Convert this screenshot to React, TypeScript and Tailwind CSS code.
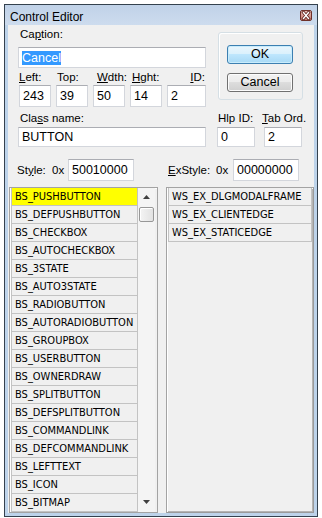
import React from "react";

const LEFT = [
  "BS_PUSHBUTTON",
  "BS_DEFPUSHBUTTON",
  "BS_CHECKBOX",
  "BS_AUTOCHECKBOX",
  "BS_3STATE",
  "BS_AUTO3STATE",
  "BS_RADIOBUTTON",
  "BS_AUTORADIOBUTTON",
  "BS_GROUPBOX",
  "BS_USERBUTTON",
  "BS_OWNERDRAW",
  "BS_SPLITBUTTON",
  "BS_DEFSPLITBUTTON",
  "BS_COMMANDLINK",
  "BS_DEFCOMMANDLINK",
  "BS_LEFTTEXT",
  "BS_ICON",
  "BS_BITMAP",
];

const RIGHT = ["WS_EX_DLGMODALFRAME", "WS_EX_CLIENTEDGE", "WS_EX_STATICEDGE"];

function Field({ className = "", children }: { className?: string; children?: React.ReactNode }) {
  return (
    <div
      className={`bg-white border border-[#d3d6dc] border-t-[#abadb3] flex items-center pl-[3px] text-[12.5px] leading-none text-black ${className}`}
    >
      {children}
    </div>
  );
}

function U({ children }: { children: React.ReactNode }) {
  return <span className="underline underline-offset-[1px]">{children}</span>;
}

function Row({ text, hi }: { text: string; hi?: boolean }) {
  return (
    <div
      className={`h-[18px] shrink-0 border-x border-b border-[#c3c3c3] pl-[3px] flex items-center text-[11px] leading-none text-black whitespace-nowrap font-['DejaVu_Sans_Condensed','DejaVu_Sans',sans-serif] [font-stretch:condensed] ${
        hi ? "bg-[#ffff00]" : "bg-[#f0f0f0]"
      }`}
    >
      {text}
    </div>
  );
}

export default function App() {
  return (
    <div className="w-[322px] h-[518px] bg-white overflow-hidden font-['Liberation_Sans',Arial,sans-serif] text-black">
      <div className="ml-[4px] mt-[4px] w-[314px] h-[513px] border border-[#34414e] bg-[#bdd3ea] flex flex-col">
        {/* Title bar */}
        <div className="h-[20px] shrink-0 flex items-start justify-between pl-[5px] pr-[5px] bg-[linear-gradient(to_bottom,#c0d2e8,#cddcee)]">
          <span className="mt-[5px] text-[12px] leading-[14px]">Control Editor</span>
          <div className="mt-[5px] w-[12px] h-[11px] rounded-[2px] border border-[#6e3029] bg-[linear-gradient(to_bottom,#e7bab3,#c77a70)] flex items-center justify-center">
            <svg width="10" height="9" viewBox="0 0 10 9">
              <path d="M2.5 1.5 L7.5 7.5 M7.5 1.5 L2.5 7.5" stroke="#5a1f19" strokeWidth="3" strokeLinecap="square" />
              <path d="M2.5 1.5 L7.5 7.5 M7.5 1.5 L2.5 7.5" stroke="#ffffff" strokeWidth="1.4" strokeLinecap="square" />
            </svg>
          </div>
        </div>

        {/* Frame + client */}
        <div className="px-[3px] pb-[3px]">
          <div className="w-[306px] h-[488px] bg-[#f0f0f0] flex flex-col">
            {/* Section 1 */}
            <div className="flex h-[82px] shrink-0">
              <div className="ml-[10px] w-[188px] flex flex-col">
                <div className="mt-[2px] h-[14px] leading-[14px] pl-[2px] text-[11.5px]">
                  Ca<U>p</U>tion:
                </div>
                <Field className="mt-[6px] h-[21px] w-[188px]">
                  <span className="bg-[#3399ff] text-white leading-[14px]">Cancel</span>
                </Field>
                <div className="mt-[2px] h-[14px] ml-[1px] flex gap-[5px] text-[11.5px] leading-[14px]">
                  <div className="w-[32px]">
                    <U>L</U>eft:
                  </div>
                  <div className="w-[32px] pl-[1px]">Top:</div>
                  <div className="w-[32px] pl-[4px]">
                    <U>W</U>dth:
                  </div>
                  <div className="w-[32px] pl-[2px]">
                    <U>H</U>ght:
                  </div>
                  <div className="w-[39px] text-right pr-[1px]">
                    <U>I</U>D:
                  </div>
                </div>
                <div className="mt-[1px] ml-[1px] flex gap-[5px]">
                  <Field className="w-[32px] h-[22px]">243</Field>
                  <Field className="w-[32px] h-[22px]">39</Field>
                  <Field className="w-[32px] h-[22px]">50</Field>
                  <Field className="w-[32px] h-[22px]">14</Field>
                  <Field className="w-[39px] h-[22px]">2</Field>
                </div>
              </div>
              <div className="ml-[12px] mt-[7px] w-[85px] h-[68px] rounded-[3px] border border-[#d5dfe5] shadow-[inset_1px_1px_0_#ffffff] flex flex-col pl-[8px] pt-[12px] gap-[9px]">
                <div className="w-[66px] h-[19px] rounded-[3px] border border-[#3c7fb1] bg-[linear-gradient(to_bottom,#eaf6fd_0%,#d9f0fc_50%,#bee6fd_50%,#a7d9f5_100%)] shadow-[inset_0_0_0_1px_#c8ecfc] flex items-center justify-center text-[12.5px] leading-none">
                  OK
                </div>
                <div className="w-[66px] h-[19px] rounded-[3px] border border-[#707070] bg-[linear-gradient(to_bottom,#f2f2f2_0%,#ebebeb_50%,#dddddd_50%,#cfcfcf_100%)] shadow-[inset_0_0_0_1px_#fcfcfc] flex items-center justify-center text-[12.5px] leading-none">
                  Cancel
                </div>
              </div>
            </div>

            {/* Section 2 */}
            <div className="mt-[4px] flex shrink-0">
              <div className="ml-[10px] w-[188px] flex flex-col">
                <div className="h-[14px] leading-[14px] pl-[2px] text-[11.5px]">
                  Cla<U>s</U>s name:
                </div>
                <Field className="mt-[2px] h-[20px] w-[188px]">BUTTON</Field>
              </div>
              <div className="ml-[11px] w-[38px] flex flex-col">
                <div className="h-[14px] leading-[14px] pl-[1px] text-[11.5px] whitespace-nowrap">Hlp ID:</div>
                <Field className="mt-[2px] h-[20px] w-[38px]">0</Field>
              </div>
              <div className="ml-[9px] w-[38px] flex flex-col">
                <div className="h-[14px] leading-[14px] -ml-[2px] text-[11.5px] whitespace-nowrap">
                  <U>T</U>ab Ord.
                </div>
                <Field className="mt-[2px] h-[20px] w-[38px]">2</Field>
              </div>
            </div>

            {/* Section 3 */}
            <div className="mt-[12px] h-[22px] shrink-0 flex items-center text-[11.5px] leading-[14px]">
              <div className="ml-[9px] w-[35px]">
                St<U>y</U>le:
              </div>
              <div className="w-[16px]">0x</div>
              <Field className="w-[66px] h-[22px]">50010000</Field>
              <div className="ml-[34px] w-[48px]">
                <U>E</U>xStyle:
              </div>
              <div className="w-[17px]">0x</div>
              <Field className="w-[66px] h-[22px]">00000000</Field>
            </div>

            {/* Section 4: lists */}
            <div className="mt-[6px] flex-1 flex min-h-0">
              <div className="ml-[1px] w-[149px] h-full border border-[#a3a3a3] bg-[#f0f0f0] shadow-[inset_1px_1px_0_#ffffff] flex pl-[1px] pr-[2px] overflow-hidden">
                <div className="w-[127px] flex flex-col overflow-hidden">
                  {LEFT.map((t, i) => (
                    <Row key={t} text={t} hi={i === 0} />
                  ))}
                </div>
                <div className="w-[17px] h-full bg-[#f4f4f4] flex flex-col items-center">
                  <div className="h-[17px] w-full flex items-center justify-center">
                    <svg width="7" height="4" viewBox="0 0 7 4">
                      <polygon points="0,4 3.5,0 7,4" fill="#404040" />
                    </svg>
                  </div>
                  <div className="mt-[2px] w-[15px] h-[15px] rounded-[2px] border border-[#979797] bg-[linear-gradient(to_right,#f4f4f4,#e2e2e2)] shadow-[inset_1px_1px_0_#ffffff]" />
                  <div className="flex-1" />
                  <div className="h-[17px] mb-[2px] w-full flex items-center justify-center">
                    <svg width="7" height="4" viewBox="0 0 7 4">
                      <polygon points="0,0 7,0 3.5,4" fill="#404040" />
                    </svg>
                  </div>
                </div>
              </div>
              <div className="ml-[8px] w-[148px] h-full border border-[#a3a3a3] border-r-[#9a9a9a] border-b-[#9a9a9a] bg-[#f0f0f0] shadow-[inset_1px_1px_0_#ffffff,inset_-1px_-1px_0_#b4b4b4] flex flex-col pl-[1px] pr-[1px]">
                {RIGHT.map((t) => (
                  <Row key={t} text={t} />
                ))}
              </div>
            </div>
          </div>
        </div>
      </div>
    </div>
  );
}
